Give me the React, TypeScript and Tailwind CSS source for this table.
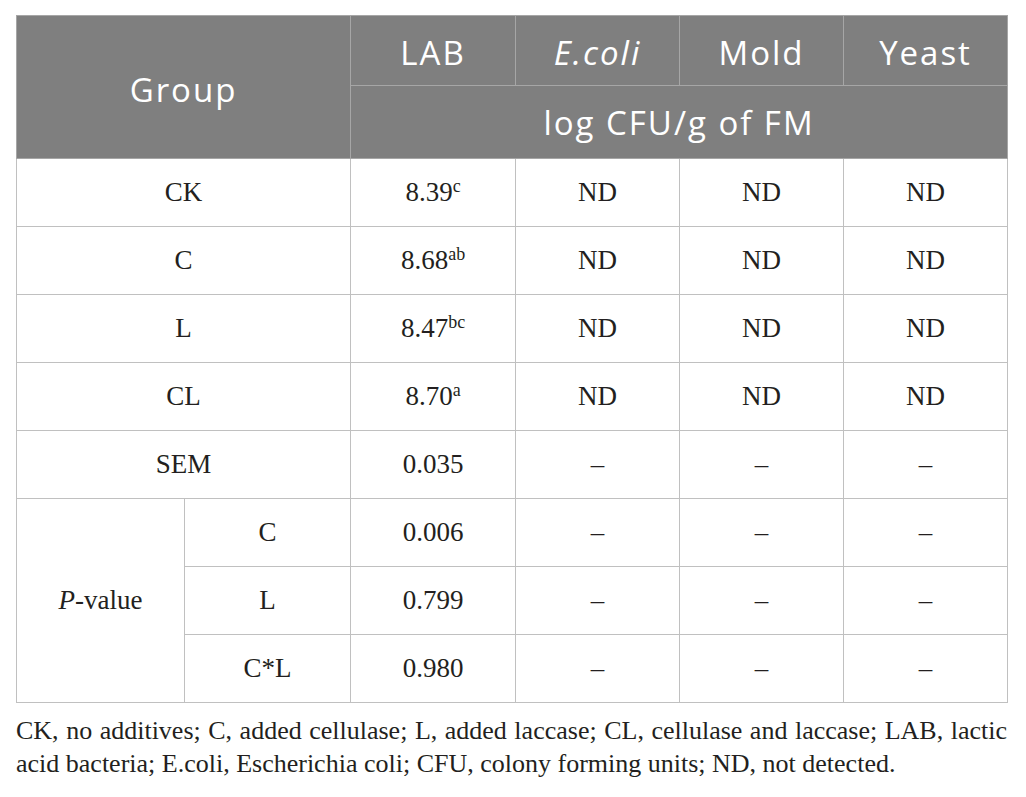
import type { ReactNode } from 'react';

type Row = {
  group: string;
  lab: string;
  sup?: string;
  rest: string[];
};

const ROWS: Row[] = [
  { group: 'CK', lab: '8.39', sup: 'c', rest: ['ND', 'ND', 'ND'] },
  { group: 'C', lab: '8.68', sup: 'ab', rest: ['ND', 'ND', 'ND'] },
  { group: 'L', lab: '8.47', sup: 'bc', rest: ['ND', 'ND', 'ND'] },
  { group: 'CL', lab: '8.70', sup: 'a', rest: ['ND', 'ND', 'ND'] },
  { group: 'SEM', lab: '0.035', rest: ['–', '–', '–'] },
];

const P_ROWS = [
  { factor: 'C', value: '0.006' },
  { factor: 'L', value: '0.799' },
  { factor: 'C*L', value: '0.980' },
];

const HEAD = 'bg-[#7f7f7f] border border-[#a6a6a6] text-white font-normal text-center align-middle';
const CELL = 'border border-[#c0c0c0] text-center align-middle h-[68px] p-0';

function Cell({ children, colSpan, rowSpan }: { children: ReactNode; colSpan?: number; rowSpan?: number }) {
  return (
    <td className={CELL} colSpan={colSpan} rowSpan={rowSpan}>
      {children}
    </td>
  );
}

export default function App() {
  return (
    <div className="w-[1026px] h-[797px] bg-white px-4 pt-[15px]">
      <table
        className="w-[991px] table-fixed border-collapse text-[#231f20] text-[27px] leading-none"
        style={{ fontFamily: '"Liberation Serif", "Times New Roman", serif' }}
      >
        <colgroup>
          <col className="w-[168px]" />
          <col className="w-[166px]" />
          <col className="w-[165px]" />
          <col className="w-[164px]" />
          <col className="w-[164px]" />
          <col className="w-[164px]" />
        </colgroup>
        <thead className="font-['Open_Sans',sans-serif] text-[33px] tracking-[0.06em]">
          <tr className="h-[70px]">
            <th colSpan={2} rowSpan={2} className={HEAD}>
              <span className="relative top-[2px]">Group</span>
            </th>
            <th className={HEAD}>
              <span className="relative top-[2px]">LAB</span>
            </th>
            <th className={HEAD}>
              <i className="relative top-[2px]">E.coli</i>
            </th>
            <th className={HEAD}>
              <span className="relative top-[2px]">Mold</span>
            </th>
            <th className={HEAD}>
              <span className="relative top-[2px]">Yeast</span>
            </th>
          </tr>
          <tr className="h-[73px]">
            <th colSpan={4} className={HEAD}>
              log CFU/g of FM
            </th>
          </tr>
        </thead>
        <tbody>
          {ROWS.map((r) => (
            <tr key={r.group}>
              <Cell colSpan={2}>{r.group}</Cell>
              <Cell>
                {r.lab}
                {r.sup && <sup className="text-[18px] top-[-9px]">{r.sup}</sup>}
              </Cell>
              {r.rest.map((v, i) => (
                <Cell key={i}>{v}</Cell>
              ))}
            </tr>
          ))}
          {P_ROWS.map((p, i) => (
            <tr key={p.factor}>
              {i === 0 && (
                <Cell rowSpan={3}>
                  <i>P</i>-value
                </Cell>
              )}
              <Cell>{p.factor}</Cell>
              <Cell>{p.value}</Cell>
              <Cell>–</Cell>
              <Cell>–</Cell>
              <Cell>–</Cell>
            </tr>
          ))}
        </tbody>
      </table>

      {/* Footnote */}
      <div
        className="w-[991px] mt-[11px] text-[26px] leading-[33px] text-[#231f20]"
        style={{ fontFamily: '"Liberation Serif", "Times New Roman", serif' }}
      >
        <p className="text-justify [text-align-last:justify] whitespace-nowrap">
          CK, no additives; C, added cellulase; L, added laccase; CL, cellulase and laccase; LAB, lactic
        </p>
        <p>acid bacteria; E.coli, Escherichia coli; CFU, colony forming units; ND, not detected.</p>
      </div>
    </div>
  );
}
